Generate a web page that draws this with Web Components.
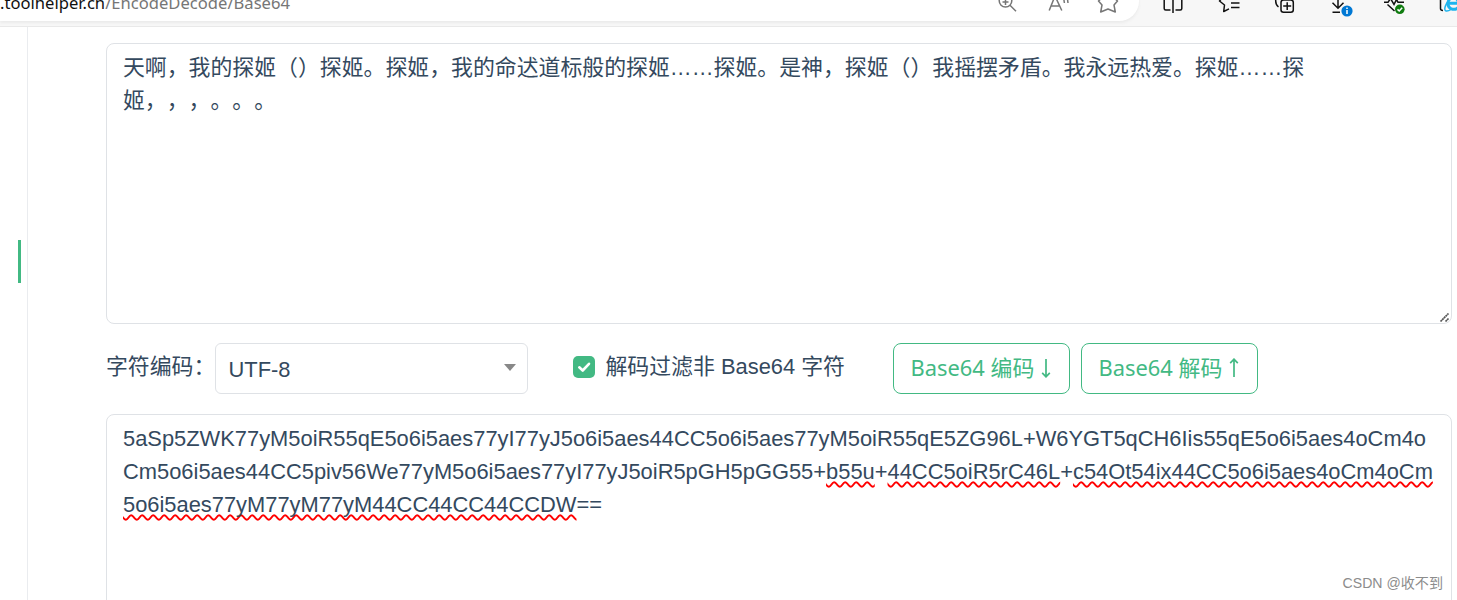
<!DOCTYPE html>
<html lang="zh-CN">
<head>
<meta charset="utf-8">
<title>Base64</title>
<style>
    body {
        margin: 0;
        height: 600px;
        overflow: hidden;
        background: #fff;
        color: #34495e;
        font: 21.89px/33px "Liberation Sans", "Noto Sans CJK SC", sans-serif;
        text-spacing-trim: space-all;
    }
    .bad { text-decoration: underline wavy #f00 1.7px; text-decoration-skip-ink: none; text-underline-offset: 2px; }
</style>
</head>
<body>
<tool-page>
    <browser-bar slot="bar" host=".toolhelper.cn" path="/EncodeDecode/Base64">
        <bar-icon slot="inner" name="zoom"></bar-icon>
        <bar-icon slot="inner" name="read"></bar-icon>
        <bar-icon slot="inner" name="star"></bar-icon>
        <bar-icon name="split"></bar-icon>
        <bar-icon name="favorites"></bar-icon>
        <bar-icon name="collections"></bar-icon>
        <bar-icon name="download"></bar-icon>
        <bar-icon name="health"></bar-icon>
        <bar-icon name="ie"></bar-icon>
    </browser-bar>
    <text-panel resize>天啊，我的探姬（）探姬。探姬，我的命迖道标般的探姬……探姬。是神，探姬（）我摇摆矛盾。我永远热爱。探姬……探<br>姬，，，。。。</text-panel>
    <option-row>
        <select-box label="字符编码：">UTF-8</select-box>
        <check-box>解码过滤非 Base64 字符</check-box>
        <outline-button arrow="down">Base64 编码</outline-button>
        <outline-button arrow="up">Base64 解码</outline-button>
    </option-row>
    <text-panel>5aSp5ZWK77yM5oiR55qE5o6i5aes77yI77yJ5o6i5aes44CC5o6i5aes77yM5oiR55qE5ZG96L+W6YGT5qCH6Iis55qE5o6i5aes4oCm4o<br>Cm5o6i5aes44CC5piv56We77yM5o6i5aes77yI77yJ5oiR5pGH5pGG55+<span class="bad">b55u</span>+<span class="bad">44CC5oiR5rC46L</span>+<span class="bad">c54Ot54ix44CC5o6i5aes4oCm4oCm</span><br><span class="bad">5o6i5aes77yM77yM77yM44CC44CC44CCDW</span>==</text-panel>
    <water-mark slot="mark">CSDN @收不到</water-mark>
</tool-page>

<script>
class ToolPage extends HTMLElement {
    constructor() {
        super();
        this.attachShadow({ mode: "open" });
        this.shadowRoot.innerHTML = `
            <style>
                :host { display: flex; flex-direction: column; height: 600px; position: relative; overflow: hidden; }
                .body { display: flex; flex: 1; min-height: 0; }
                aside { width: 27px; border-right: 1px solid #eaecef; display: flex; justify-content: flex-end; }
                .active { width: 3px; height: 43px; margin: 213px 6px 0 0; background: #42b983; }
                main { display: flex; flex-direction: column; width: 1346px; padding: 16px 0 0 78px; }
            </style>
            <slot name="bar"></slot>
            <div class="body">
                <aside><div class="active"></div></aside>
                <main><slot></slot></main>
            </div>
            <slot name="mark"></slot>
        `;
    }
}
customElements.define("tool-page", ToolPage);

class BrowserBar extends HTMLElement {
    constructor() {
        super();
        this.attachShadow({ mode: "open" });
        this.shadowRoot.innerHTML = `
            <style>
                :host { display: flex; gap: 6px; height: 26px; overflow: hidden; background: #f7f7f7; border-bottom: 1px solid #e9e9e9; flex: none; }
                .address { display: flex; width: 1133px; height: 40px; margin-top: -19px; padding-right: 6px; flex: none;
                    background: #fff; border-radius: 0 20px 20px 0; box-shadow: 0 2px 3px #ebebeb; }
                .url { flex: 1; white-space: nowrap; font: 16.6px/24px "Noto Sans", sans-serif; padding-top: 10px; color: #767676; }
                .url b { font-weight: 400; color: #111; }
                .inner, .outer { display: flex; }
                .inner { --cell: 50px; padding-top: 19px; }
                .outer { --cell: 56px; }
            </style>
            <div class="address">
                <div class="url"><b>${this.getAttribute("host")}</b>${this.getAttribute("path")}</div>
                <div class="inner"><slot name="inner"></slot></div>
            </div>
            <div class="outer"><slot></slot></div>
        `;
    }
}
customElements.define("browser-bar", BrowserBar);

// every glyph is centred on x = 0, the window edge is y = 0
const icons = {
    zoom: `<g stroke="#767676"><circle cx="-2.5" cy=".8" r="6.3"/><path d="M2 5.3 8 11.2M-5.5 2h6M-2.5-2v7"/></g>`,
    read: `<path stroke="#767676" d="M-8.8 10.5-3-4 3.8 10.5M-6.8 6H1.5M5.8-1 6.4 3M9.5-1 10 3"/>`,
    star: `<path stroke="#767676" stroke-linejoin="round" d="M-4-4-9.5 1-6 5-7.3 12 0 9 7.3 12 6 5 9.5 1 4-4"/>`,
    split: `<path stroke="#111" d="M-3-5H-8.8V8.5Q-8.8 10-7.3 10H-2.5M2.5 10H7.3Q8.8 10 8.8 8.5V-5H3M0-5V13"/>`,
    favorites: `<path stroke="#111" stroke-linejoin="round" d="M-4-5-9.5 1-4.5 5-5.3 11.5 0 8.8M2 3H10.5M2 7.5H10.5"/>`,
    collections: `<path stroke="#111" d="M-9.3-5V1Q-9.3 5-6.5 7"/><rect stroke="#111" x="-4" y="0" width="12.3" height="12.3" rx="2.5"/><path stroke="#111" d="M2.2 2.2V10M-1.8 6.1H6.2"/>`,
    download: `<path stroke="#111" d="M-3-5V8M-8.5 2.7-3 8.2 2.5 2.7M-8.5 12.2H-1"/><circle cx="6" cy="11" r="5.6" fill="#0078d4"/><path stroke="#fff" d="M6 10V14M6 7.5V9"/>`,
    health: `<g transform="translate(-3.5)"><path stroke="#111" d="M-9.5 2.3H-5.5L-3-1.5.5 4.5 3-.5 4.5 2.3H10.5M-6 4.5 1 11"/><circle cx="6.3" cy="9.3" r="4.8" fill="#107c10"/><path stroke="#fff" d="M4 9.4 5.7 11 8.7 7.8"/></g>`,
    ie: `<path stroke="#111" d="M-12.5-5V8.5Q-12.5 10.5-10 10.5"/><path stroke="#1eb4ee" stroke-width="3" d="M-4.5 3.2H5.5C5.5-4-5-4-5 3.5C-5 10.5 3.5 10.5 5.5 7"/><path stroke="#1eb4ee" d="M-3-1C-7 3-10 10-7 11Q-5 11.5-2 9.5"/>`
};

class BarIcon extends HTMLElement {
    constructor() {
        super();
        this.attachShadow({ mode: "open" });
        this.shadowRoot.innerHTML = `
            <style>
                :host { display: block; width: var(--cell); flex: none; }
                svg { display: block; margin: auto; fill: none; stroke-width: 1.5; }
            </style>
            <svg width="32" height="20" viewBox="-16 0 32 20">${icons[this.getAttribute("name")]}</svg>
        `;
    }
}
customElements.define("bar-icon", BarIcon);

class TextPanel extends HTMLElement {
    constructor() {
        super();
        this.attachShadow({ mode: "open" });
        const grip = `<svg width="12" height="12" viewBox="0 0 12 12"><path d="M1.5 10.5 9.5 2.5M6.5 10.5 9.5 7.5" stroke="#555" stroke-width="1.7" stroke-dasharray="2 .4"/></svg>`;
        this.shadowRoot.innerHTML = `
            <style>
                :host { display: block; flex: none; box-sizing: border-box; height: 281px; padding: 7px 16px; position: relative;
                    white-space: nowrap; border: 1px solid #dfe2e6; border-radius: 8px; }
                svg { position: absolute; right: 0; bottom: 0; }
            </style>
            <slot></slot>${this.hasAttribute("resize") ? grip : ""}
        `;
    }
}
customElements.define("text-panel", TextPanel);

class OptionRow extends HTMLElement {
    constructor() {
        super();
        this.attachShadow({ mode: "open" });
        this.shadowRoot.innerHTML = `
            <style>
                :host { display: flex; flex: none; height: 51px; margin: 19px 0 20px; white-space: nowrap; }
            </style>
            <slot></slot>
        `;
    }
}
customElements.define("option-row", OptionRow);

class SelectBox extends HTMLElement {
    constructor() {
        super();
        this.attachShadow({ mode: "open" });
        this.shadowRoot.innerHTML = `
            <style>
                :host { display: flex; }
                label { width: 109px; line-height: 48px; }
                .box { display: flex; align-items: center; justify-content: space-between; box-sizing: border-box;
                    width: 313px; padding: 1px 11px 0 12.5px; border: 1px solid #dfe2e6; border-radius: 6px; }
                i { border: 6px solid transparent; border-top: 7px solid #888; border-bottom: 0; margin-top: -3px; }
            </style>
            <label>${this.getAttribute("label")}</label>
            <div class="box"><slot></slot><i></i></div>
        `;
    }
}
customElements.define("select-box", SelectBox);

class CheckBox extends HTMLElement {
    constructor() {
        super();
        this.attachShadow({ mode: "open" });
        this.shadowRoot.innerHTML = `
            <style>
                :host { display: flex; width: 365px; padding-left: 45px; box-sizing: border-box; gap: 10.5px; line-height: 48px; }
                svg { margin-top: 13px; }
            </style>
            <svg width="22" height="22" viewBox="0 0 22 22" fill="none">
                <rect width="22" height="22" rx="5" fill="#42b983"/>
                <path d="M6.3 11.3 9.7 14.5 16 7.8" stroke="#fff" stroke-width="2.6" stroke-linecap="round" stroke-linejoin="round"/>
            </svg>
            <span><slot></slot></span>
        `;
    }
}
customElements.define("check-box", CheckBox);

class OutlineButton extends HTMLElement {
    constructor() {
        super();
        this.attachShadow({ mode: "open" });
        const flip = this.getAttribute("arrow") === "up" ? "scale(1 -1)" : "";
        this.shadowRoot.innerHTML = `
            <style>
                :host { display: flex; align-items: center; box-sizing: border-box; width: 177px; margin-right: 11px; padding: 0 0 2px 16.5px;
                    border: 1px solid #42b983; border-radius: 8px; color: #42b983; font-family: "Noto Sans", "Noto Sans CJK SC", sans-serif; }
                svg { margin-left: 7px; }
            </style>
            <slot></slot>
            <svg width="10" height="20" viewBox="-5 -10 10 20" fill="none" stroke="#42b983" stroke-width="1.7">
                <path transform="${flip}" d="M0-9V8.5M-3.8 4.8 0 8.8 3.8 4.8"/>
            </svg>
        `;
    }
}
customElements.define("outline-button", OutlineButton);

class WaterMark extends HTMLElement {
    constructor() {
        super();
        this.attachShadow({ mode: "open" });
        this.shadowRoot.innerHTML = `
            <style>
                :host { position: absolute; right: 14px; bottom: 7px; font-size: 14.1px; line-height: 20px; color: #8c8c8c; }
            </style>
            <slot></slot>
        `;
    }
}
customElements.define("water-mark", WaterMark);
</script>
</body>
</html>
